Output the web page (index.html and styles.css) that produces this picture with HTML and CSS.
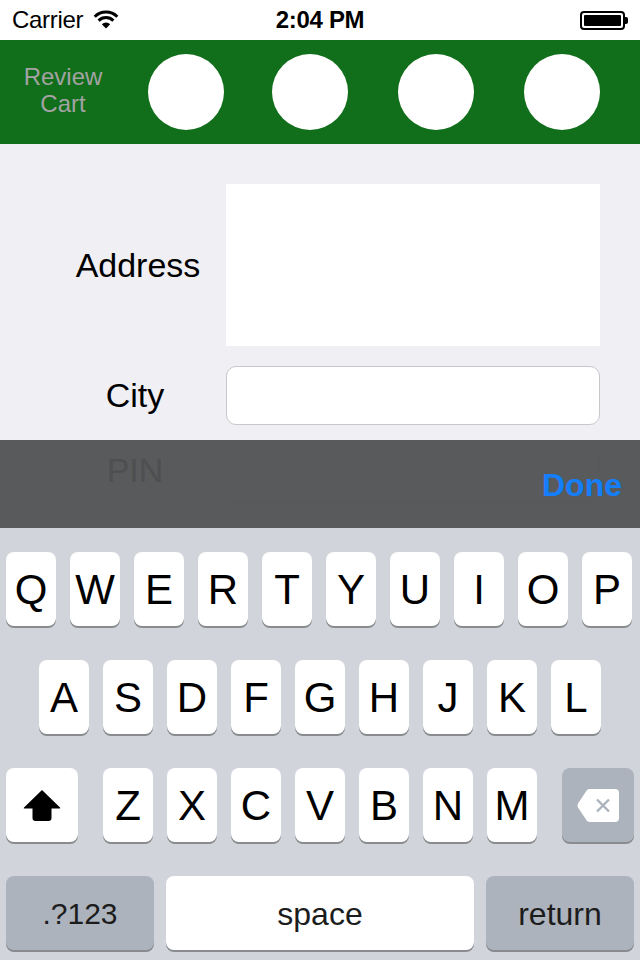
FILE: index.html
```html
<!DOCTYPE html>
<html>
<head>
<meta charset="utf-8">
<link rel="stylesheet" href="styles.css">
</head>
<body>
<div class="screen">
  <div class="statusbar">
    <div class="sb-left">
      <span class="carrier">Carrier</span>
      <svg class="wifi" width="26" height="19" viewBox="0 0 26 19">
        <path d="M1.7 6.7 A16 16 0 0 1 24.3 6.7" fill="none" stroke="#000" stroke-width="3"/>
        <path d="M5.6 10.6 A10.5 10.5 0 0 1 20.4 10.6" fill="none" stroke="#000" stroke-width="3"/>
        <path d="M13 18.5 L8.8 14.3 A6 6 0 0 1 17.2 14.3 Z" fill="#000"/>
      </svg>
    </div>
    <div class="sb-time">2:04 PM</div>
    <div class="sb-right">
      <div class="battery"><div class="battery-fill"></div></div>
      <div class="battery-nub"></div>
    </div>
  </div>

  <div class="header">
    <div class="review">Review<br>Cart</div>
    <div class="circles">
      <div class="circle"></div>
      <div class="circle"></div>
      <div class="circle"></div>
      <div class="circle"></div>
    </div>
  </div>

  <div class="form">
    <div class="label label-address">Address</div>
    <div class="field field-area"></div>
    <div class="label">City</div>
    <div class="field field-text"></div>
    <div class="label label-pin">PIN</div>
    <div class="field field-text"></div>
  </div>

  <div class="keyboard-wrap">
    <div class="toolbar">
      <span class="done">Done</span>
    </div>
    <div class="keyboard">
      <div class="row row1">
        <div class="key">Q</div><div class="key">W</div><div class="key">E</div><div class="key">R</div><div class="key">T</div><div class="key">Y</div><div class="key">U</div><div class="key">I</div><div class="key">O</div><div class="key">P</div>
      </div>
      <div class="row row2">
        <div class="key">A</div><div class="key">S</div><div class="key">D</div><div class="key">F</div><div class="key">G</div><div class="key">H</div><div class="key">J</div><div class="key">K</div><div class="key">L</div>
      </div>
      <div class="row row3">
        <div class="key key-shift">
          <svg width="38" height="32" viewBox="0 0 38 32">
            <path d="M19 1 L37 18.5 Q38 19.5 36.5 19.5 L28.5 19.5 L28.5 29 Q28.5 32 25.5 32 L12.5 32 Q9.5 32 9.5 29 L9.5 19.5 L1.5 19.5 Q0 19.5 1 18.5 Z" fill="#000"/>
          </svg>
        </div>
        <div class="letters">
          <div class="key">Z</div><div class="key">X</div><div class="key">C</div><div class="key">V</div><div class="key">B</div><div class="key">N</div><div class="key">M</div>
        </div>
        <div class="key key-special key-delete">
          <svg width="42" height="33" viewBox="0 0 42 33">
            <path d="M13 0 L38 0 Q42 0 42 4 L42 29 Q42 33 38 33 L13 33 Q11 33 10 32 L1 18.5 Q0 16.5 1 14.5 L10 1 Q11 0 13 0 Z" fill="#fff"/>
            <path d="M20 10.5 L32 22.5 M32 10.5 L20 22.5" stroke="#acb3bd" stroke-width="2.4" fill="none"/>
          </svg>
        </div>
      </div>
      <div class="row row4">
        <div class="key key-special key-num">.?123</div>
        <div class="key key-space">space</div>
        <div class="key key-special key-return">return</div>
      </div>
    </div>
  </div>
</div>
</body>
</html>
```

FILE: styles.css
```css
* { box-sizing: border-box; }
html, body {
  margin: 0;
  padding: 0;
}
body {
  width: 640px;
  height: 960px;
  overflow: hidden;
  font-family: "Liberation Sans", Arial, sans-serif;
  background: #efeff4;
}
.screen {
  position: relative;
  width: 640px;
  height: 960px;
  overflow: hidden;
  background: #efeff4;
}

/* status bar */
.statusbar {
  height: 40px;
  background: #fff;
  display: flex;
  align-items: center;
  justify-content: space-between;
  padding: 0 12px 0 12px;
  color: #000;
  font-size: 24px;
}
.sb-left {
  display: flex;
  align-items: center;
  width: 160px;
}
.carrier { letter-spacing: -0.3px; }
.wifi { margin-left: 10px; margin-top: -2px; }
.sb-time {
  font-weight: bold;
  letter-spacing: -0.3px;
}
.sb-right {
  width: 160px;
  display: flex;
  justify-content: flex-end;
  align-items: center;
}
.battery {
  width: 45px;
  height: 19px;
  border: 2px solid #000;
  border-radius: 4px;
  padding: 2px;
  background: #fff;
}
.battery-fill {
  width: 100%;
  height: 100%;
  background: #000;
  border-radius: 1px;
}
.battery-nub {
  width: 3px;
  height: 7px;
  background: #000;
  border-radius: 0 2px 2px 0;
}

/* header */
.header {
  height: 104px;
  background: #116e1a;
  display: flex;
  align-items: center;
}
.review {
  width: 126px;
  text-align: center;
  color: #a3a3a3;
  font-size: 24px;
  line-height: 27px;
  margin-top: -4px;
}
.circles {
  display: flex;
  margin-left: 22px;
  gap: 48px;
}
.circle {
  width: 76px;
  height: 76px;
  border-radius: 50%;
  background: #fff;
}
.circle:nth-child(n+3) { margin-left: 2px; }

/* form */
.form {
  display: grid;
  grid-template-columns: 134px 374px;
  column-gap: 24px;
  row-gap: 20px;
  padding: 40px 0 0 68px;
  align-items: center;
}
.label {
  text-align: center;
  font-size: 34px;
  color: #000;
}
.label-address { padding-left: 6px; }
.label-pin { margin-top: -8px; }
.field { background: #fff; }
.field-area { height: 162px; }
.field-text {
  height: 59px;
  border: 1px solid #c7c7cc;
  border-radius: 10px;
}

/* keyboard overlay */
.keyboard-wrap {
  position: absolute;
  left: 0;
  bottom: 0;
  width: 640px;
  height: 520px;
  display: flex;
  flex-direction: column;
}
.toolbar {
  height: 88px;
  background: rgba(82, 83, 84, 0.955);
  display: flex;
  align-items: center;
  justify-content: flex-end;
  padding: 0 18px 0 0;
}
.done {
  color: #147efb;
  font-weight: bold;
  font-size: 32px;
  margin-top: 2px;
}
.keyboard {
  flex: 1;
  background: #d1d5db;
  padding-top: 24px;
  display: flex;
  flex-direction: column;
  gap: 34px;
}
.row {
  display: flex;
  height: 74px;
}
.row1 { padding: 0 6px; gap: 14px; }
.row2 { justify-content: center; gap: 14px; }
.row3 { padding: 0 6px; justify-content: space-between; }
.row4 { padding: 0 6px; gap: 12px; }
.letters { display: flex; gap: 14px; }

.key {
  width: 50px;
  height: 74px;
  background: #fff;
  border-radius: 8px;
  box-shadow: 0 2px 0 #898b8f;
  display: flex;
  align-items: center;
  justify-content: center;
  font-size: 42px;
  color: #000;
  padding-top: 2px;
}
.key-special { background: #acb3bd; }
.key-shift, .key-delete { width: 72px; padding-top: 0; }
.key-num {
  width: 148px;
  font-size: 30px;
  color: #1c1c1c;
}
.key-space {
  width: 308px;
  font-size: 32px;
  color: #1c1c1c;
}
.key-return {
  width: 148px;
  font-size: 32px;
  color: #1c1c1c;
}
```
